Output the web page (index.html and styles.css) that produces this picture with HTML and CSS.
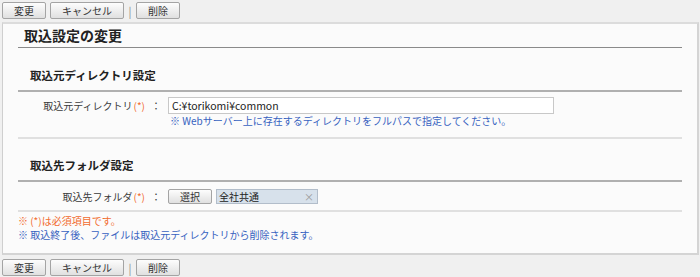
FILE: index.html
```html
<!DOCTYPE html>
<html lang="ja">
<head>
<meta charset="utf-8">
<title>取込設定の変更</title>
<link rel="stylesheet" href="styles.css">
</head>
<body>

<div class="toolbar">
  <button class="btn btn-short">変更</button>
  <button class="btn btn-long">キャンセル</button>
  <span class="sep">|</span>
  <button class="btn btn-short">削除</button>
</div>

<div class="panel">
  <h1>取込設定の変更</h1>

  <h2>取込元ディレクトリ設定</h2>
  <div class="row row-dir">
    <div class="label">取込元ディレクトリ<span class="req">(*)</span>：</div>
    <div class="field">
      <input class="text" type="text" value="C:¥torikomi¥common">
      <div class="hint">※ Webサーバー上に存在するディレクトリをフルパスで指定してください。</div>
    </div>
  </div>

  <h2 class="second">取込先フォルダ設定</h2>
  <div class="row row-folder">
    <div class="label">取込先フォルダ<span class="req">(*)</span>：</div>
    <div class="field inline">
      <button class="btn btn-pick">選択</button>
      <span class="tag">全社共通<span class="tag-x">×</span></span>
    </div>
  </div>

  <p class="note note-req">※ (*)は必須項目です。</p>
  <p class="note">※ 取込終了後、ファイルは取込元ディレクトリから削除されます。</p>
</div>

<div class="toolbar">
  <button class="btn btn-short">変更</button>
  <button class="btn btn-long">キャンセル</button>
  <span class="sep">|</span>
  <button class="btn btn-short">削除</button>
</div>

</body>
</html>
```

FILE: styles.css
```css
body {
  margin: 0;
  padding: 2px 1px 0 2px;
  background: #f0f0f0;
  font-family: "Noto Sans CJK JP", "DejaVu Sans", sans-serif;
  font-size: 10px;
  color: #333333;
}

.toolbar {
  display: flex;
  align-items: center;
  height: 17px;
}

.btn {
  box-sizing: border-box;
  height: 17px;
  padding: 0;
  border: 1px solid #a4a4a4;
  border-radius: 2px;
  background: linear-gradient(#fdfdfd, #e0e0e0);
  font-family: inherit;
  font-size: 10px;
  line-height: 15px;
  color: #333333;
}

.btn-short {
  width: 44px;
  margin-right: 4px;
}

.btn-long {
  width: 74px;
}

.sep {
  width: 12px;
  text-align: center;
  color: #888888;
  font-size: 11px;
}

.panel {
  margin: 3px 0 4px 0;
  padding: 0 15px 0 15px;
  height: 229px;
  border-top: 2px solid #dcdcdc;
  border-left: 1px solid #cfcfcf;
  border-right: 2px solid #d4d4d4;
  border-bottom: 2px solid #d4d4d4;
  background: #fbfbfb;
}

h1 {
  margin: 0;
  padding: 1px 0 2px 6px;
  font-size: 14px;
  line-height: 20px;
  border-bottom: 1px solid #8a8a8a;
  color: #222222;
}

h2 {
  margin: 18px 0 0 0;
  padding: 0 0 6px 12px;
  font-size: 11.5px;
  line-height: 18px;
  border-bottom: 2px solid #b0b0b0;
  color: #222222;
}

h2.second {
  margin-top: 17px;
}

.row {
  display: flex;
  border-bottom: 2px solid #e0e0e0;
}

.row-dir {
  padding: 5px 0 9px 0;
}

.row-folder {
  padding: 7px 0 6px 0;
}

.label {
  width: 143px;
  text-align: right;
  line-height: 17px;
  color: #3a3a3a;
}

.row-folder .label {
  line-height: 15px;
}

.req {
  color: #f26b2e;
  margin: 0 6px 0 1px;
}

.field {
  margin-left: 7px;
}

.field.inline {
  display: flex;
  align-items: center;
  gap: 4px;
}

.text {
  box-sizing: border-box;
  display: block;
  width: 386px;
  height: 17px;
  margin: 0;
  padding: 0 3px;
  border: 1px solid #c8c8c8;
  background: #ffffff;
  font-family: inherit;
  font-size: 10.5px;
  color: #222222;
}

.hint {
  padding-left: 2px;
  line-height: 14px;
  color: #3762c0;
}

.btn-pick {
  width: 44px;
  height: 15px;
  line-height: 13px;
}

.tag {
  box-sizing: border-box;
  display: flex;
  justify-content: space-between;
  width: 102px;
  height: 15px;
  padding: 0 3px 0 2px;
  border: 1px solid #b2bdca;
  background: #d7e1eb;
  line-height: 13px;
  color: #222222;
}

.tag-x {
  color: #9a9a9a;
}

.note {
  margin: 0;
  line-height: 14px;
  color: #3762c0;
}

.note-req {
  margin-top: 2px;
  color: #f26b2e;
}
```
